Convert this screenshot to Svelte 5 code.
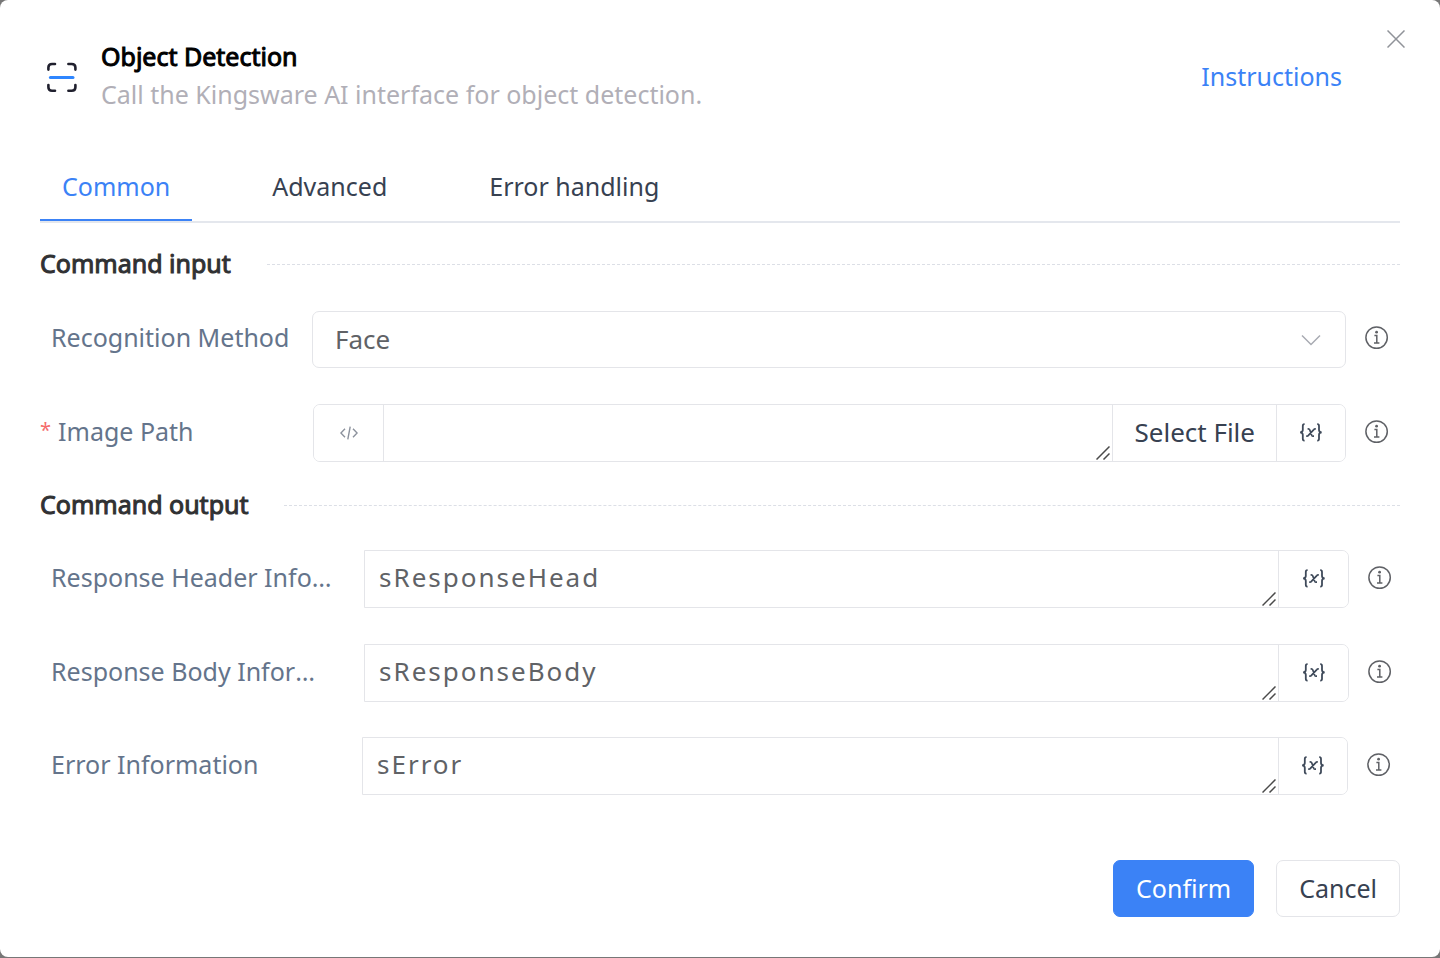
<script>
  let active = $state('Common');
  let method = $state('Face');
  let imagePath = $state('');
  const tabs = ['Common', 'Advanced', 'Error handling'];
  const outputs = $state([
    { id: 'head', label: 'Response Header Information', value: 'sResponseHead', kind: 'response' },
    { id: 'body', label: 'Response Body Information', value: 'sResponseBody', kind: 'response' },
    { id: 'error', label: 'Error Information', value: 'sError', kind: 'error' }
  ]);
</script>

{#snippet info()}
  <button class="info" type="button" aria-label="Help">
    <svg viewBox="0 0 24 24" width="24" height="24" fill="none" stroke="#5f6166" stroke-width="1.5">
      <circle cx="11.6" cy="11.6" r="10.7" />
      <path d="M9.4 9.6h2.4v7M9 16.9h5.4" stroke-width="1.5" />
      <circle cx="11.6" cy="6.2" r="1.4" fill="#5f6166" stroke="none" />
    </svg>
  </button>
{/snippet}

{#snippet variable()}
  <button class="addon variable" type="button" aria-label="Insert variable">
    <svg viewBox="0 0 24 20" width="24" height="20" fill="none" stroke="#3f4a5a" stroke-width="1.8">
      <path d="M5.6 1.2H5.3Q3.8 1.2 3.8 3V7Q3.8 9.1 1.2 9.4Q3.8 9.7 3.8 11.8V15.8Q3.8 17.6 5.3 17.6H5.6" />
      <path d="M18.2 1.2h.3q1.5 0 1.5 1.8v4q0 2.1 2.6 2.4q-2.6.3-2.6 2.4v4q0 1.8-1.5 1.8h-.3" />
      <path d="M8.6 5.8h.7q1 0 1.4 1l2 5.4q.4 1 1.4 1h.9M16.8 5.8h-.5q-.9 0-1.5.8L9.4 12.4q-.6.8-1.6.8h-.6" stroke-width="1.7" />
    </svg>
  </button>
{/snippet}

{#snippet grip()}
  <svg class="grip" viewBox="0 0 14 14" width="14" height="14" stroke="#4a4a4a" stroke-width="1.5">
    <path d="M.5 13.5 13.5.5M7.5 13.5l6-6" />
  </svg>
{/snippet}

<main class="dialog">
  <button class="close" type="button" aria-label="Close">
    <svg viewBox="0 0 18 18" width="18" height="18" stroke="#909399" stroke-width="1.5"><path d="M.5.5l17 17M17.5.5l-17 17" /></svg>
  </button>

  <header>
    <svg class="scan" viewBox="0 0 30 34" width="30" height="34" fill="none" stroke="#20202e" stroke-width="2.6" stroke-linecap="round">
      <path d="M1.4 10.6V8.6Q1.4 5 5 5h3M21.4 5h3.2Q28.4 5 28.4 8.6v2M28.4 26v2.2q0 3.6-3.8 3.6h-3.2M8 31.8H5q-3.6 0-3.6-3.6v-2.2" />
      <path d="M3.4 18.5h22.6" stroke="#2e86ff" stroke-width="3" />
    </svg>
    <div class="heading">
      <h1>Object Detection</h1>
      <p>Call the Kingsware AI interface for object detection.</p>
    </div>
    <a href="#instructions">Instructions</a>
  </header>

  <nav class="tabs" role="tablist">
    {#each tabs as tab}
      <button type="button" role="tab" aria-selected={active === tab} class:active={active === tab} onclick={() => (active = tab)}>{tab}</button>
    {/each}
  </nav>

  <form onsubmit={(e) => e.preventDefault()}>
    <h2>Command input</h2>
    <div class="row method">
      <label for="method">Recognition Method</label>
      <div class="select">
        <select id="method" bind:value={method}>
          <option>Face</option>
        </select>
        <svg viewBox="0 0 20 12" width="20" height="12" fill="none" stroke="#a8abb2" stroke-width="1.5"><path d="M1 1.5l9 9 9-9" /></svg>
      </div>
      {@render info()}
    </div>
    <div class="row path">
      <label for="path"><span class="star">*</span>Image Path</label>
      <div class="group rounded">
        <button class="addon code" type="button" aria-label="Expression mode">
          <svg viewBox="0 0 18 14" width="18" height="14" fill="none" stroke="#8c929d" stroke-width="1.4"><path d="M5 2.8.9 7 5 11.2M13 2.8 17.1 7 13 11.2M10.2.6 7.8 13.4" /></svg>
        </button>
        <div class="area">
          <textarea id="path" rows="1" bind:value={imagePath}></textarea>
          {@render grip()}
        </div>
        <button class="addon" type="button">Select File</button>
        {@render variable()}
      </div>
      {@render info()}
    </div>

    <h2>Command output</h2>
    {#each outputs as out}
      <div class="row {out.kind}">
        <label for={out.id}>{out.label}</label>
        <div class="group">
          <div class="area">
            <textarea id={out.id} rows="1" bind:value={out.value}></textarea>
            {@render grip()}
          </div>
          {@render variable()}
        </div>
        {@render info()}
      </div>
    {/each}
  </form>

  <footer>
    <button class="confirm" type="button">Confirm</button>
    <button class="cancel" type="button">Cancel</button>
  </footer>
</main>

<style>
  :global(body) {
    background: #777;
    font: 25px/36px "Noto Sans", "Open Sans", sans-serif;
    color: #374151;
  }
  * { box-sizing: border-box; }
  button, select, textarea { font: inherit; color: inherit; margin: 0; }
  button { cursor: pointer; background: #fff; border: 0; padding: 0; }
  svg { display: block; flex: none; }
  h1, h2, p { margin: 0; font-size: 25px; }

  .dialog {
    position: relative;
    display: flex;
    flex-direction: column;
    min-height: calc(100vh - 1px);
    margin-bottom: 1px;
    padding: 37px 40px 40px;
    background: #fff;
    border-radius: 8px;
  }
  .close { position: absolute; top: 30px; right: 35px; }

  header { display: flex; align-items: center; gap: 24px; padding: 0 58px 0 7px; }
  .heading { flex: 1; min-width: 0; padding-bottom: 2px; }
  h1, h2 { font-weight: 400; -webkit-text-stroke: 1px currentColor; }
  h1 { color: #000; line-height: 38px; }
  p { color: #b1afb7; line-height: 38px; }
  a { color: #3b82f6; text-decoration: none; }

  .tabs { display: flex; gap: 58px; margin-top: 39px; border-bottom: 2px solid #e4e7ed; }
  .tabs button {
    height: 67px;
    padding: 0 22px 2px;
    border-bottom: 2px solid transparent;
    background: none;
  }
  .tabs .active { color: #3b82f6; border-color: #3b82f6; }

  h2 {
    display: flex;
    align-items: center;
    gap: 36px;
    height: 36px;
    margin-bottom: 30px;
    color: #303133;
  }
  h2::after { content: ""; flex: 1; margin-top: 2px; border-top: 1px dashed #dcdfe6; }
  form { padding-top: 22px; }
  form h2:not(:first-child) { margin: 24px 0 28px; }

  .row { display: grid; align-items: center; column-gap: 19px; }
  .row + .row { margin-top: 36px; }
  .row + .error { margin-top: 35px; }
  .method { grid-template-columns: 253px 1fr 24px; padding-right: 11px; }
  .path { grid-template-columns: 254px 1fr 24px; padding-right: 11px; }
  .response { grid-template-columns: 305px 1fr 24px; padding-right: 8px; }
  .error { grid-template-columns: 303px 1fr 24px; padding-right: 9px; }
  label {
    padding: 0 0 5px 11px;
    color: #64748b;
    white-space: nowrap;
    overflow: hidden;
    text-overflow: ellipsis;
  }
  .response label { margin-right: 10px; }
  .path label { display: flex; gap: 7px; padding-left: 0; }
  .star { color: #f56c6c; font-size: 20px; line-height: 34px; }
  .info { padding-bottom: 3px; }

  .select { display: grid; align-items: center; }
  .select > * { grid-area: 1 / 1; }
  .select svg { justify-self: end; margin-right: 25px; pointer-events: none; }
  select {
    appearance: none;
    height: 57px;
    width: 100%;
    padding: 0 22px 2px;
    border: 1px solid #e4e5e9;
    border-radius: 7px;
    background: #fff;
    color: #606266;
    font-size: 26px;
  }
  .group {
    display: flex;
    height: 58px;
    border: 1px solid #e4e5e9;
    border-radius: 0 7px 7px 0;
    overflow: hidden;
    font-size: 26px;
  }
  .rounded { border-radius: 7px; }
  .addon {
    display: flex;
    align-items: center;
    justify-content: center;
    padding: 0 21px 2px;
    border-left: 1px solid #e4e5e9;
  }
  .variable { width: 70px; padding-bottom: 0; }
  .path .variable, .error .variable { width: 69px; }
  .code { width: 70px; padding-bottom: 0; border-left: 0; border-right: 1px solid #e4e5e9; }
  .area { position: relative; flex: 1; min-width: 0; }
  textarea {
    display: block;
    width: 100%;
    height: 100%;
    padding: 8px 14px;
    border: 0;
    outline: 0;
    resize: none;
    overflow: hidden;
    color: #606266;
    letter-spacing: 2px;
  }
  .grip { position: absolute; right: 2px; bottom: 1px; pointer-events: none; }

  footer { display: flex; justify-content: flex-end; gap: 22px; margin-top: auto; }
  footer button { height: 57px; padding: 0 22px 2px; border: 1px solid #e4e5e9; border-radius: 7px; }
  footer .confirm { background: #3b82f6; border-color: #3b82f6; color: #fff; }
</style>
